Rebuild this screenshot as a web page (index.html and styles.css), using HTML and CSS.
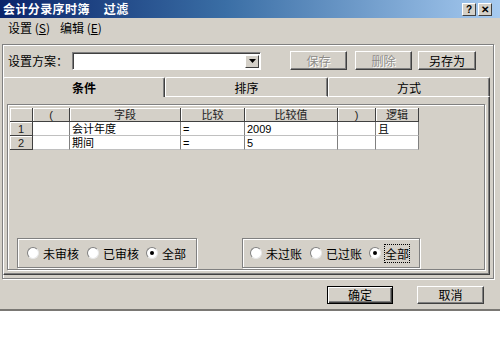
FILE: index.html
```html
<!DOCTYPE html>
<html>
<head>
<meta charset="utf-8">
<link rel="stylesheet" href="styles.css">
</head>
<body>
<div class="dialog">
  <div class="titlebar">
    <span class="title">会计分录序时簿<span class="title2">过滤</span></span>
    <span class="tbtn">?</span>
    <span class="tbtn close">✕</span>
  </div>
  <div class="menubar">
    <span class="menu">设置 (<u>S</u>)</span>
    <span class="menu">编辑 (<u>E</u>)</span>
  </div>
  <div class="frame">
    <div class="setrow">
      <span class="setlabel">设置方案：</span>
      <div class="combo"><span class="drop"><svg width="7" height="4" viewBox="0 0 7 4"><path d="M0 0h7L3.5 4z" fill="#000"/></svg></span></div>
      <span class="btn disabled b1">保存</span>
      <span class="btn disabled b2">删除</span>
      <span class="btn b3">另存为</span>
    </div>
    <div class="tabs">
      <span class="tab sel">条件</span>
      <span class="tab mid">排序</span>
      <span class="tab last">方式</span>
    </div>
    <div class="panel">
      <div class="inner">
        <div class="grid">
          <div class="hc"></div><div class="hc">(</div><div class="hc">字段</div><div class="hc">比较</div><div class="hc">比较值</div><div class="hc">)</div><div class="hc">逻辑</div>
          <div class="hc num">1</div><div class="dc"></div><div class="dc">会计年度</div><div class="dc">=</div><div class="dc">2009</div><div class="dc"></div><div class="dc">且</div>
          <div class="hc num">2</div><div class="dc"></div><div class="dc">期间</div><div class="dc">=</div><div class="dc">5</div><div class="dc"></div><div class="dc"></div>
        </div>
        <div class="radios">
          <div class="group g1">
            <span class="opt"><span class="radio"></span>未审核</span>
            <span class="opt"><span class="radio"></span>已审核</span>
            <span class="opt"><span class="radio on"></span>全部</span>
          </div>
          <div class="group g2">
            <span class="opt"><span class="radio"></span>未过账</span>
            <span class="opt"><span class="radio"></span>已过账</span>
            <span class="opt"><span class="radio on"></span><span class="focus">全部</span></span>
          </div>
        </div>
      </div>
    </div>
  </div>
  <div class="footer">
    <span class="btn ok">确定</span>
    <span class="btn cancel">取消</span>
  </div>
</div>
</body>
</html>
```
FILE: styles.css
```css
* { box-sizing: border-box; }
body {
  margin: 0;
  background: #fff;
  font-family: "Noto Sans CJK SC", "Liberation Sans", sans-serif;
  font-size: 12px;
  color: #000;
}
.dialog {
  width: 500px;
  height: 311px;
  background: #d4d0c8;
  border-bottom: 2px solid #7a7874;
  display: flex;
  flex-direction: column;
}
.titlebar {
  height: 18px;
  flex: none;
  background: linear-gradient(90deg, #0a246a 0%, #3a6ea5 45%, #a6caf0 100%);
  display: flex;
  align-items: center;
  padding: 0 8px 0 3px;
  color: #fff;
  font-weight: bold;
  font-size: 12px;
}
.title { flex: 1; white-space: nowrap; line-height: 18px; letter-spacing: 0.4px; }
.title2 { margin-left: 14px; }
.tbtn {
  width: 14px;
  height: 13px;
  margin-left: 2px;
  background: #d4d0c8;
  border: 1px solid;
  border-color: #fff #404040 #404040 #fff;
  color: #000;
  font-size: 10px;
  line-height: 11px;
  text-align: center;
  font-family: "Liberation Sans", sans-serif;
}
.menubar {
  height: 26px;
  flex: none;
  display: flex;
  padding: 0 0 0 8px;
  line-height: 18px;
}
.menu { margin-right: 10px; margin-top: 1px; }
.frame {
  height: 235px;
  width: 492px;
  flex: none;
  margin-left: 2px;
  border: 1px solid #808080;
  box-shadow: inset 1px 1px #fff, 1px 1px #fff;
  display: flex;
  flex-direction: column;
}
.setrow {
  margin-top: 6px;
  height: 19px;
  display: flex;
  align-items: center;
  padding-left: 5px;
}
.setlabel { width: 64px; }
.combo {
  width: 189px;
  height: 18px;
  background: #fff;
  border: 1px solid;
  border-color: #808080 #fff #fff #808080;
  box-shadow: inset 1px 1px #404040;
  display: flex;
  justify-content: flex-end;
  padding: 2px 1px 1px 2px;
}
.drop {
  width: 14px;
  height: 13px;
  background: #d4d0c8;
  border: 1px solid;
  border-color: #fff #404040 #404040 #fff;
  display: flex;
  align-items: center;
  justify-content: center;
}
.btn {
  height: 19px;
  background: #d4d0c8;
  border: 1px solid;
  border-color: #fff #404040 #404040 #fff;
  box-shadow: inset -1px -1px #808080;
  display: flex;
  align-items: center;
  justify-content: center;
  line-height: 1;
}
.disabled { color: #8e8c88; text-shadow: 1px 1px #fff; }
.b1 { width: 57px; margin-left: 29px; }
.b2 { width: 57px; margin-left: 8px; }
.b3 { width: 58px; margin-left: 6px; }
.tabs {
  margin-top: 7px;
  height: 20px;
  display: flex;
  flex: none;
}
.tab {
  height: 20px;
  display: flex;
  align-items: center;
  justify-content: center;
  border-top: 1px solid #fff;
  border-left: 1px solid #fff;
  border-right: 1px solid #404040;
  border-radius: 2px 2px 0 0;
  box-shadow: inset -1px 0 #808080;
  border-bottom: 1px solid #fff;
}
.tab.sel { width: 162px; font-weight: bold; border-bottom: none; }
.tab.mid { width: 163px; }
.tab.last { width: 162px; }
.panel {
  width: 487px;
  height: 178px;
  border: 1px solid;
  border-color: transparent #404040 #404040 #fff;
  border-top: none;
  box-shadow: inset -1px -1px #808080;
  padding: 7px 4px 4px 3px;
  display: flex;
}
.inner {
  flex: 1;
  border: 1px solid #808080;
  box-shadow: inset 1px 1px #fff, 1px 1px #fff;
  padding: 3px 0 1px 2px;
  display: flex;
  flex-direction: column;
}
.grid {
  display: grid;
  grid-template-columns: 23px 37px 111px 64px 93px 38px 43px;
  grid-template-rows: 14px 14px 14px;
  width: 409px;
  font-family: "Liberation Sans", "Noto Sans CJK SC", sans-serif;
  font-size: 11px;
  line-height: 12px;
}
.hc, .dc {
  overflow: hidden;
  display: flex;
  align-items: center;
  white-space: nowrap;
}
.hc {
  background: #d4d0c8;
  border-right: 1px solid #404040;
  border-bottom: 1px solid #404040;
  box-shadow: inset 1px 1px #fff;
  justify-content: center;
  color: #222;
}
.dc {
  background: #fff;
  border-right: 1px solid #808080;
  border-bottom: 1px solid #c0c0c0;
  padding-left: 2px;
}
.radios {
  margin-top: auto;
  display: flex;
  padding-left: 7px;
}
.group {
  height: 30px;
  border: 1px solid #808080;
  box-shadow: inset 1px 1px #fff, 1px 1px #fff;
  display: flex;
  align-items: center;
}
.g1 { width: 180px; padding-left: 9px; }
.g2 { width: 178px; margin-left: 45px; padding-left: 7px; }
.opt {
  display: flex;
  align-items: center;
  margin-right: 8px;
  white-space: nowrap;
}
.g1 .opt:nth-child(2), .g2 .opt:nth-child(2) { margin-right: 7px; }
.radio {
  width: 12px;
  height: 12px;
  border-radius: 50%;
  border: 1px solid;
  border-color: #808080 #e8e8e8 #e8e8e8 #808080;
  background: #fff;
  margin-right: 4px;
  display: flex;
  align-items: center;
  justify-content: center;
}
.radio.on::after {
  content: "";
  width: 4px;
  height: 4px;
  border-radius: 50%;
  background: #000;
}
.focus { outline: 1px dotted #000; outline-offset: 0; }
.footer {
  flex: 1;
  display: flex;
  justify-content: flex-end;
  align-items: flex-start;
  padding: 7px 16px 0 0;
}
.ok {
  width: 66px;
  height: 18px;
  border: 1px solid #000;
  box-shadow: inset 1px 1px #fff, inset -1px -1px #404040, inset -2px -2px #808080;
}
.cancel { width: 67px; height: 18px; margin-left: 24px; }
```
